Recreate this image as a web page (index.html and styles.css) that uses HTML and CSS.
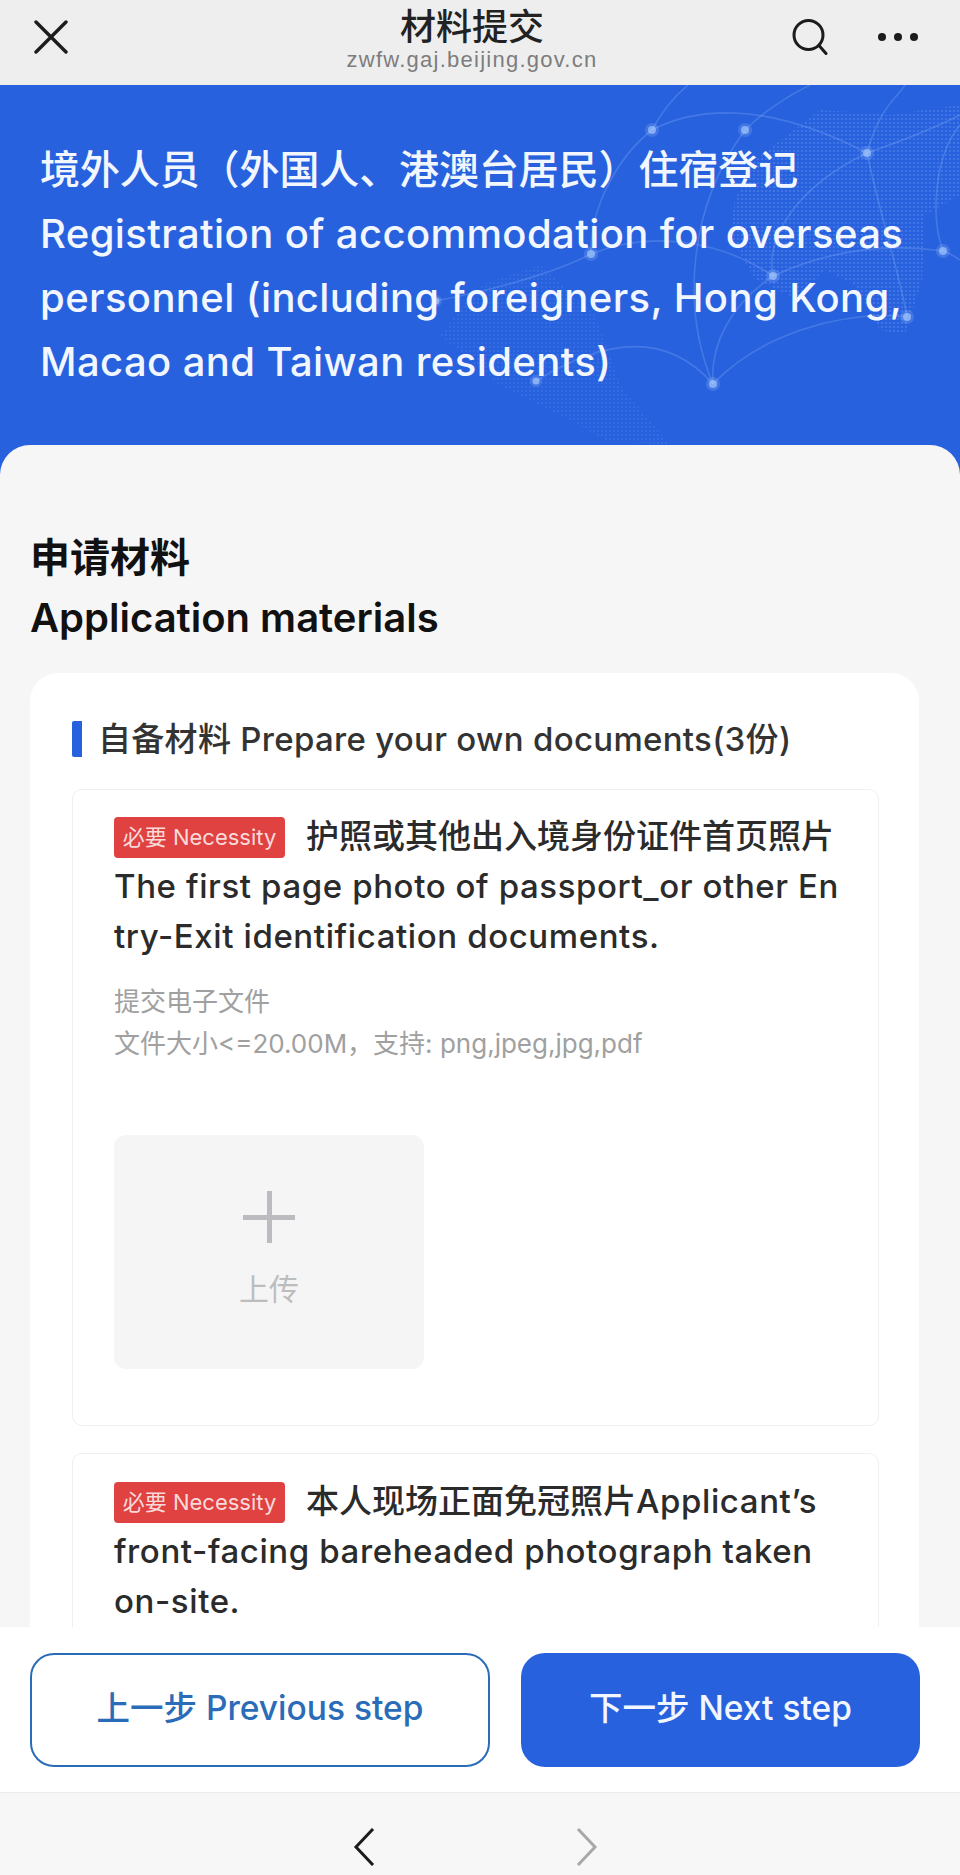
FILE: index.html
```html
<!DOCTYPE html>
<html lang="zh-CN">
<head>
<meta charset="utf-8">
<title>材料提交</title>
<link rel="stylesheet" href="styles.css">
</head>
<body>
<div class="app">
  <header class="topbar">
    <svg class="ico-close" viewBox="0 0 34 34"><path d="M2 2 L32 32 M32 2 L2 32"/></svg>
    <div class="topbar-title">
      <div class="topbar-name">材料提交</div>
      <div class="topbar-url">zwfw.gaj.beijing.gov.cn</div>
    </div>
    <svg class="ico-search" viewBox="0 0 36 36"><circle cx="16.5" cy="16" r="14.5"/><path d="M27 26.5 L34 34.5"/></svg>
    <div class="ico-more"><i></i><i></i><i></i></div>
  </header>
  <main class="scroll">
    <section class="hero">
      <svg class="hero-map" viewBox="0 0 400 360">
        <defs>
          <pattern id="dotgrid" width="4" height="4" patternUnits="userSpaceOnUse">
            <circle cx="2" cy="2" r="1.1" fill="#8fb6ff" fill-opacity=".28"/>
          </pattern>
        </defs>
        <g fill="url(#dotgrid)">
          <path d="M175 115 L195 75 L260 25 L330 30 L400 20 L400 110 L365 130 L362 195 L345 250 L320 245 L295 200 L265 185 L240 215 L195 195 L170 150 Z"/>
          <path class="map-land-far" d="M35 230 L-20 180 L-80 200 L-120 250 L-60 300 L0 330 L45 355 L110 360 L60 300 Z"/>
        </g>
        <g class="map-lines">
          <path d="M92 45 C 100 30, 110 15, 128 0"/>
          <path d="M92 45 C 130 25, 200 12, 307 68"/>
          <path d="M185 45 C 200 30, 225 12, 250 0"/>
          <path d="M307 68 C 330 60, 370 45, 400 30"/>
          <path d="M307 68 C 320 20, 340 10, 345 0"/>
          <path d="M383 166 C 370 130, 375 70, 400 40"/>
          <path d="M383 166 C 390 168, 395 172, 400 175"/>
          <path d="M31 169 C 90 145, 160 155, 213 191"/>
          <path d="M213 191 C 280 160, 340 160, 383 166"/>
          <path d="M31 169 C 30 120, 60 70, 92 45"/>
          <path d="M31 169 C 10 180, -40 200, -125 216"/>
          <path d="M153 299 C 120 220, 130 120, 185 45"/>
          <path d="M153 299 C 150 260, 170 220, 213 191"/>
          <path d="M153 299 C 200 250, 280 225, 347 232"/>
          <path d="M153 299 C 110 250, 50 250, -24 296"/>
          <path d="M307 68 C 320 130, 340 190, 347 232"/>
          <path d="M213 191 C 205 150, 240 100, 307 68"/>
        </g>
        <g class="map-glow">
          <circle cx="92" cy="45" r="7"/><circle cx="185" cy="45" r="7"/><circle cx="307" cy="68" r="7"/>
          <circle cx="31" cy="169" r="7"/><circle cx="213" cy="191" r="7"/><circle cx="383" cy="166" r="7"/>
          <circle cx="347" cy="232" r="7"/><circle cx="153" cy="299" r="7"/><circle cx="-124" cy="216" r="6"/><circle cx="-24" cy="296" r="6"/>
        </g>
        <g class="map-dots">
          <circle cx="92" cy="45" r="4"/><circle cx="185" cy="45" r="4"/><circle cx="307" cy="68" r="4"/>
          <circle cx="31" cy="169" r="4"/><circle cx="213" cy="191" r="4"/><circle cx="383" cy="166" r="4"/>
          <circle cx="347" cy="232" r="4"/><circle cx="153" cy="299" r="4"/><circle cx="-124" cy="216" r="3.5"/><circle cx="-24" cy="296" r="3.5"/>
        </g>
      </svg>
      <h1 class="hero-title"><span class="hero-title-zh">境外人员（外国人、港澳台居民）住宿登记</span><br>Registration of accommodation for overseas personnel (including foreigners, Hong Kong, Macao and Taiwan residents)</h1>
    </section>
    <section class="sheet">
      <h2 class="sheet-title">申请材料<br>Application materials</h2>
      <div class="card">
        <h3 class="card-title">自备材料 Prepare your own documents(3份)</h3>
        <article class="item">
          <p class="item-title item-title-break"><span class="badge">必要 Necessity</span>护照或其他出入境身份证件首页照片<br><span class="item-en">The first page photo of passport_or other Entry-Exit identification documents.</span></p>
          <p class="item-desc">提交电子文件<br>文件大小&lt;=20.00M，支持: png,jpeg,jpg,pdf</p>
          <div class="upload">
            <span class="upload-plus"></span>
            <span class="upload-label">上传</span>
          </div>
        </article>
        <article class="item item-second">
          <p class="item-title"><span class="badge">必要 Necessity</span>本人现场正面免冠照片<span class="item-en">Applicant’s<br>front-facing bareheaded photograph taken<br>on-site.</span></p>
        </article>
      </div>
    </section>
  </main>
  <footer class="actions">
    <button class="btn btn-prev">上一步 Previous step</button>
    <button class="btn btn-next">下一步 Next step</button>
  </footer>
  <nav class="navbar">
    <svg class="chev" viewBox="0 0 22 38"><path d="M20 1 L3 19 L20 37"/></svg>
    <svg class="chev chev-off" viewBox="0 0 22 38"><path d="M2 1 L19 19 L2 37"/></svg>
  </nav>
</div>
</body>
</html>
```

FILE: styles.css
```css
* { box-sizing: border-box; }
html, body { margin: 0; padding: 0; }
body { font-family: "Inter", "Noto Sans CJK SC", sans-serif; background: #f6f6f7; }
.app { height: 1875px; display: flex; flex-direction: column; overflow: hidden; }

.topbar { height: 85px; flex: none; background: #eeeeee; display: flex; align-items: center; padding: 0 0 0 34px; }
.topbar svg { fill: none; stroke: #1c1c1c; stroke-linecap: round; }
.ico-close { width: 34px; height: 34px; stroke-width: 3.4; margin-top: -11px; flex: none; }
.topbar-title { flex: 1; align-self: flex-start; text-align: center; margin-left: 84px; padding-top: 5px; }
.topbar-name { font-family: "Noto Sans CJK SC", sans-serif; font-size: 36px; font-weight: 500; line-height: 38px; color: #222; }
.topbar-url { font-family: "Liberation Sans", sans-serif; font-size: 22px; line-height: 26px; letter-spacing: 1.25px; color: #7d7d7d; margin-top: 4px; }
.ico-search { width: 36px; height: 36px; stroke-width: 3; margin: -11px 50px 0 0; flex: none; }
.ico-more { display: flex; gap: 8px; margin: -11px 42px 0 0; }
.ico-more i { width: 8px; height: 8px; border-radius: 50%; background: #1c1c1c; display: block; }

.scroll { flex: 1; min-height: 0; overflow: hidden; background: #2861de; }
.hero { position: relative; height: 360px; padding: 53px 30px 0 40px; background: #2861de; overflow: hidden; }
.hero-map { position: absolute; left: 560px; top: 0; width: 400px; height: 360px; overflow: visible; }
.map-land-far { opacity: .55; }
.map-lines path { fill: none; stroke: rgba(170,205,255,.22); stroke-width: 1.6; }
.map-glow circle { fill: rgba(170,205,255,.2); }
.map-dots circle { fill: rgba(175,208,255,.62); }
.hero-title { position: relative; margin: 0; font-size: 40px; font-weight: 500; line-height: 64px; color: #f2f7ff; letter-spacing: 0.4px; }
.hero-title-zh { letter-spacing: -0.1px; }

.sheet { background: #f6f6f7; border-radius: 30px 30px 0 0; padding: 83px 41px 0 30px; height: 1400px; }
.sheet-title { margin: 0; font-size: 40px; font-weight: 600; line-height: 60px; color: #111; }
.card { margin-top: 25px; background: #fff; border-radius: 28px; padding: 48px 40px 0 42px; }
.card-title { margin: 0; font-size: 33px; font-weight: 500; line-height: 36px; letter-spacing: .3px; color: #333; padding-left: 16px; border-left: 10px solid #2861de; border-radius: 2px; }
.item { margin-top: 32px; border: 1px solid #efefef; border-radius: 10px; padding: 21px 33px 0 41px; height: 637px; }
.item-second { margin-top: 27px; height: 400px; padding-top: 22px; }
.item-title { margin: 0; font-size: 33px; font-weight: 500; line-height: 50px; color: #2b2b2b; }
.item-title-break { word-break: break-all; }
.item-en { letter-spacing: .6px; }
.badge { display: inline-block; width: 171px; height: 41px; line-height: 41px; margin-right: 21px; border-radius: 4px; background: #e04141; color: #f8dada; font-size: 22px; font-weight: 400; text-align: center; vertical-align: 3px; letter-spacing: 0; }
.item-desc { margin: 20px 0 0; font-size: 26px; line-height: 42px; color: #a0a0a0; }
.upload { margin-top: 70px; width: 310px; height: 234px; border-radius: 12px; background: #f5f5f6; display: flex; flex-direction: column; align-items: center; padding-top: 56px; }
.upload-plus { width: 52px; height: 52px; background: linear-gradient(#bcbcc0,#bcbcc0) center/100% 5px no-repeat, linear-gradient(#bcbcc0,#bcbcc0) center/5px 100% no-repeat; }
.upload-label { margin-top: 28px; font-size: 30px; line-height: 36px; color: #bdbdbd; }

.actions { height: 165px; flex: none; background: #fff; display: flex; gap: 31px; padding: 26px 40px 25px 30px; }
.btn { height: 114px; padding: 0 0 10px; border-radius: 24px; font-family: inherit; font-size: 33.5px; font-weight: 500; }
.btn-prev { width: 460px; background: #fff; border: 2px solid #2a6cb8; color: #2a6cb8; }
.btn-next { width: 399px; background: #2861de; border: 0; color: #f2f6ff; }

.navbar { height: 83px; flex: none; background: #f7f7f7; border-top: 1px solid #ececec; display: flex; justify-content: center; align-items: center; gap: 201px; padding: 26px 9px 0 0; }
.chev { width: 22px; height: 38px; fill: none; stroke: #1c1c1c; stroke-width: 3; }
.chev-off { stroke: #a8a8a8; }
```
